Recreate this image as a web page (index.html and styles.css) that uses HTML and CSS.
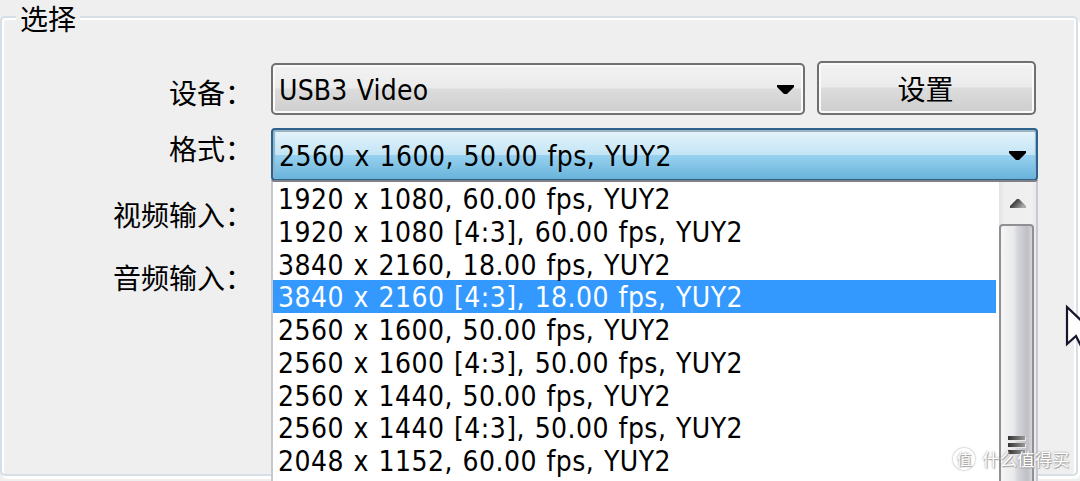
FILE: index.html
```html
<!DOCTYPE html>
<html lang="zh-CN">

<head>
    <meta charset="UTF-8">
    <meta name="viewport" content="width=device-width, initial-scale=1.0">
    <title>选择</title>
    <link rel="stylesheet" href="styles.css">
</head>

<body>
    <div class="group">
        <div class="legend">选择</div>

        <div class="row device">
            <div class="label">设备：</div>
            <div class="combo">
                <span>USB3 Video</span>
                <svg class="arrow" width="18" height="10" viewBox="0 0 18 10"><path d="M0 0h17v2L10 9H7L0 2z"/></svg>
            </div>
            <div class="button">设置</div>
        </div>

        <div class="row format">
            <div class="label">格式：</div>
            <div class="combo open">
                <span class="mode">2560 x 1600, 50.00 fps, YUY2</span>
                <svg class="arrow" width="18" height="10" viewBox="0 0 18 10"><path d="M0 0h17v2L10 9H7L0 2z"/></svg>
                <div class="dropdown">
                    <ul class="options mode">
                        <li>1920 x 1080, 60.00 fps, YUY2</li>
                        <li>1920 x 1080 [4:3], 60.00 fps, YUY2</li>
                        <li>3840 x 2160, 18.00 fps, YUY2</li>
                        <li class="selected">3840 x 2160 [4:3], 18.00 fps, YUY2</li>
                        <li>2560 x 1600, 50.00 fps, YUY2</li>
                        <li>2560 x 1600 [4:3], 50.00 fps, YUY2</li>
                        <li>2560 x 1440, 50.00 fps, YUY2</li>
                        <li>2560 x 1440 [4:3], 50.00 fps, YUY2</li>
                        <li>2048 x 1152, 60.00 fps, YUY2</li>
                    </ul>
                    <div class="scrollbar">
                        <div class="scroll-up">
                            <svg width="16" height="10" viewBox="0 0 16 10">
                                <defs>
                                    <linearGradient id="up" x1="0" y1="0" x2="1" y2="0.500">
                                        <stop offset="0.200" stop-color="#222"/>
                                        <stop offset="1" stop-color="#aaa"/>
                                    </linearGradient>
                                </defs>
                                <path d="M7 1h2l7 7v2H0V8z" fill="url(#up)"/>
                            </svg>
                        </div>
                        <div class="thumb">
                            <div class="grip"><i></i><i></i><i></i></div>
                        </div>
                    </div>
                </div>
            </div>
        </div>

        <div class="row video">
            <div class="label">视频输入：</div>
        </div>
        <div class="row audio">
            <div class="label">音频输入：</div>
        </div>
    </div>

    <svg class="cursor" width="16" height="46" viewBox="0 0 16 46">
        <path d="M3 4v37l9-8 5 10 7 0V24z" fill="#fff" stroke="#15152b" stroke-width="2.200"/>
    </svg>

    <div class="watermark">
        <span class="logo">值</span>
        <span>什么值得买</span>
    </div>
</body>

</html>
```
FILE: styles.css
```css
* {
    box-sizing: border-box;
}

body {
    position: relative;
    margin: 0;
    width: 1080px;
    height: 481px;
    padding-top: 16px;
    overflow: hidden;
    background: #efefef;
    color: #000;
    font-family: "DejaVu Sans Condensed", "DejaVu Sans", "Noto Sans CJK SC", sans-serif;
    font-stretch: condensed;
    font-size: 28px;
}

.group {
    position: relative;
    width: 1078px;
    height: 460px;
    padding-top: 43px;
    border: 2px solid #d5dfe5;
    border-radius: 5px;
    box-shadow: inset 2px 2px 0 #fff, inset -2px 0 0 #fff, 2px 3px 0 #fff;
}

.legend {
    position: absolute;
    left: 14px;
    top: -18px;
    padding: 0 4px;
    height: 40px;
    line-height: 36px;
    background: #efefef;
    font-family: "Noto Sans CJK SC", sans-serif;
}

.row {
    display: flex;
}

.label {
    width: 251px;
    margin-right: 18px;
    text-align: right;
    line-height: 40px;
    font-family: "Noto Sans CJK SC", sans-serif;
}

.device {
    height: 67px;
}

.device .label {
    padding-top: 11px;
}

.format {
    height: 65px;
}

.video {
    height: 63px;
}

.video .label,
.audio .label {
    padding-top: 1px;
}

.combo {
    display: flex;
    align-items: center;
    justify-content: space-between;
    width: 534px;
    height: 52px;
    margin-top: 2px;
    padding: 2px 8px 0 6px;
    border: 2px solid #707070;
    border-radius: 5px;
    background: linear-gradient(#f3f3f3, #ebebeb 48%, #dcdcdc 50%, #cecece);
    box-shadow: inset 0 0 0 2px #fafafa;
    letter-spacing: 0.200px;
    word-spacing: 1px;
}

.combo.open {
    position: relative;
    width: 767px;
    height: 53px;
    margin-top: 0;
    padding: 3px 9px 0 6px;
    border: 2px solid #2c628b;
    border-radius: 4px;
    background: linear-gradient(#e5f3fb, #c4e5f6 50%, #98d1ef 52%, #68b3db);
    box-shadow: inset 0 2px 0 #9eb3c2, inset 2px 0 1px #8cb4cd, inset -1px 0 1px #8cb4cd;
}

.mode {
    letter-spacing: 0.450px;
    word-spacing: 1.200px;
}

.button {
    width: 219px;
    height: 54px;
    margin-left: 12px;
    padding-right: 2px;
    border: 2px solid #707070;
    border-radius: 5px;
    background: linear-gradient(#f3f3f3, #ebebeb 48%, #dcdcdc 50%, #cecece);
    box-shadow: inset 0 0 0 2px #fafafa;
    text-align: center;
    line-height: 51px;
    font-family: "Noto Sans CJK SC", sans-serif;
}

.dropdown {
    position: absolute;
    left: -2px;
    top: 50px;
    z-index: 1;
    display: flex;
    width: 767px;
    height: 310px;
    border: 2px solid #c8c8d4;
    border-top-color: #808087;
    background: #fff;
}

.options {
    flex: 1;
    margin: 0;
    padding: 0 3px 0 0;
    list-style: none;
}

.options li {
    height: 32.750px;
    padding-left: 5px;
    line-height: 35px;
}

.options .selected {
    background: #3399ff;
    color: #fff;
}

.scrollbar {
    display: flex;
    flex-direction: column;
    width: 37px;
    background: linear-gradient(90deg, #e3e3e3, #eee 15%, #f0f0f0 85%, #e9e9e9);
}

.scroll-up {
    display: flex;
    flex: none;
    align-items: center;
    justify-content: center;
    height: 42px;
}

.thumb {
    width: 35px;
    height: 440px;
    border: 2px solid #909094;
    border-radius: 4px;
    background: linear-gradient(90deg, #f5f5f6, #e9e9eb 42%, #d6d7dc 52%, #bfc0c6 85%, #d5d5da);
}

.grip {
    display: flex;
    flex-direction: column;
    gap: 3px;
    width: 17px;
    margin: 210px 0 0 7px;
}

.grip i {
    height: 4px;
    background: linear-gradient(90deg, #333, #999);
    box-shadow: 1px 1px 0 #e8e8e8;
}

.cursor {
    position: absolute;
    left: 1064px;
    top: 303px;
}

.watermark {
    position: absolute;
    left: 953px;
    top: 446px;
    z-index: 2;
    display: flex;
    align-items: center;
    gap: 7px;
    height: 26px;
    color: #fff;
    font-family: "Noto Sans CJK SC", sans-serif;
    font-size: 17.500px;
    line-height: 22px;
    text-shadow: 0 0 2px #888, 1px 1px 1px #aaa;
    white-space: nowrap;
}

.logo {
    width: 22px;
    height: 22px;
    border: 1px solid #fff;
    border-radius: 50%;
    box-shadow: 0 0 2px #888;
    font-size: 15px;
    line-height: 19px;
    text-align: center;
}
```
